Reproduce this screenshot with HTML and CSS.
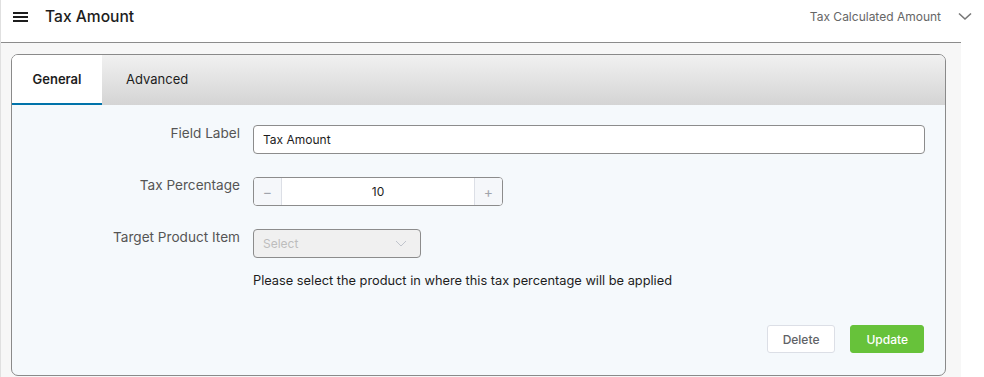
FILE: index.html
```html
<!DOCTYPE html>
<html lang="en">
<head>
    <meta charset="UTF-8">
    <title>Tax Amount</title>
    <link rel="stylesheet" href="styles.css">
</head>
<body>
    <div class="page">
        <header class="top-bar">
            <div class="top-left">
                <svg class="menu-icon" width="16" height="12" viewBox="0 0 16 12">
                    <rect x="0" y="1" width="15" height="2" fill="#1d1d1d"/>
                    <rect x="0" y="5" width="15" height="2" fill="#1d1d1d"/>
                    <rect x="0" y="9" width="15" height="2" fill="#1d1d1d"/>
                </svg>
                <h1 class="page-title">Tax Amount</h1>
            </div>
            <div class="top-right">
                <span class="field-type">Tax Calculated Amount</span>
                <svg class="chevron" width="14" height="9" viewBox="0 0 14 9">
                    <path d="M1 1.5 L7 7 L13 1.5" fill="none" stroke="#777" stroke-width="1.6"/>
                </svg>
            </div>
        </header>

        <div class="content">
            <div class="panel">
                <div class="tabs">
                    <div class="tab active">General</div>
                    <div class="tab">Advanced</div>
                </div>

                <div class="panel-body">
                    <div class="form-row">
                        <label class="form-label">Field Label</label>
                        <input type="text" class="text-input" value="Tax Amount">
                    </div>

                    <div class="form-row">
                        <label class="form-label">Tax Percentage</label>
                        <div class="stepper">
                            <span class="step-btn minus">&minus;</span>
                            <span class="step-value">10</span>
                            <span class="step-btn plus">+</span>
                        </div>
                    </div>

                    <div class="form-row">
                        <label class="form-label">Target Product Item</label>
                        <div class="field-wrap">
                            <div class="select-box">
                                <span>Select</span>
                                <svg width="12" height="7" viewBox="0 0 12 7">
                                    <path d="M1 1 L6 6 L11 1" fill="none" stroke="#c0c4cc" stroke-width="1"/>
                                </svg>
                            </div>
                            <p class="help-text">Please select the product in where this tax percentage will be applied</p>
                        </div>
                    </div>

                    <div class="actions">
                        <button class="btn btn-delete">Delete</button>
                        <button class="btn btn-update">Update</button>
                    </div>
                </div>
            </div>
        </div>
    </div>
</body>
</html>
```

FILE: styles.css
```css
* {
    margin: 0;
    padding: 0;
    box-sizing: border-box;
}

body {
    font-family: Inter, "Noto Sans", "Liberation Sans", sans-serif;
    background: white;
    color: #1d1d1d;
    height: 377px;
    overflow: hidden;
}

.page {
    width: 961px;
    height: 377px;
    border-left: 1px solid #e0e0e0;
    background: #f7f7f7;
}

.top-bar {
    height: 43px;
    background: white;
    border-bottom: 1px solid #8c8c8c;
    display: flex;
    justify-content: space-between;
    align-items: flex-start;
    padding: 7px 0 0 12px;
}

.top-left {
    display: flex;
    align-items: center;
    gap: 16px;
}

.menu-icon {
    display: block;
}

.page-title {
    font-size: 15.6px;
    font-weight: 500;
    color: #1d1d1d;
    line-height: 20px;
}

.top-right {
    display: flex;
    align-items: center;
    gap: 17px;
    margin-right: -11px;
    padding-top: 2px;
}

.field-type {
    font-size: 12px;
    color: #666;
}

.chevron {
    display: block;
}

.content {
    padding: 11px 15px 0 10px;
}

.panel {
    border: 1px solid #8a8a8a;
    border-radius: 7px;
    overflow: hidden;
    background: #f5f9fc;
    height: 322px;
}

.tabs {
    display: flex;
    height: 50px;
    background: linear-gradient(to bottom, #f1f1f1 0%, #d4d4d4 100%);
}

.tab {
    padding: 0 24px;
    font-size: 13px;
    line-height: 48px;
    color: #1d1d1d;
}

.tab.active {
    width: 90px;
    padding: 0;
    text-align: center;
    background: white;
    font-weight: 600;
    border-bottom: 2px solid #0073aa;
}

.panel-body {
    padding: 20px 20px 0 0;
}

.form-row {
    display: grid;
    grid-template-columns: 228px 1fr;
    column-gap: 13px;
    margin-bottom: 23px;
}

.form-label {
    text-align: right;
    font-size: 13.6px;
    color: #555;
    line-height: 16px;
}

.text-input {
    height: 29px;
    border: 1px solid #8c8c8c;
    border-radius: 4px;
    background: white;
    padding: 0 9px;
    font-family: inherit;
    font-size: 12px;
    color: #1d1d1d;
}

.stepper {
    width: 250px;
    height: 29px;
    display: flex;
    border: 1px solid #8c8c8c;
    border-radius: 4px;
    background: white;
    overflow: hidden;
}

.step-btn {
    width: 28px;
    display: flex;
    align-items: center;
    justify-content: center;
    background: #f5f7fa;
    color: #a0a4ac;
    font-size: 14px;
}

.minus {
    border-right: 1px solid #dcdfe6;
}

.plus {
    border-left: 1px solid #dcdfe6;
}

.step-value {
    flex: 1;
    text-align: center;
    font-size: 12px;
    line-height: 27px;
}

.select-box {
    width: 168px;
    height: 29px;
    border: 1px solid #8c8c8c;
    border-radius: 4px;
    background: #f0f0f0;
    display: flex;
    align-items: center;
    justify-content: space-between;
    padding: 0 13px 0 9px;
    font-size: 12px;
    color: #bdbdbd;
}

.help-text {
    margin-top: 15px;
    font-size: 12.8px;
    color: #1d1d1d;
    line-height: 16px;
}

.actions {
    display: flex;
    justify-content: flex-end;
    gap: 15px;
    margin: 36px 1px 0 0;
}

.btn {
    height: 28px;
    border-radius: 3px;
    font-family: inherit;
    font-size: 12px;
    font-weight: 500;
    padding: 0 15px;
}

.btn-delete {
    background: white;
    border: 1px solid #dcdfe6;
    color: #606266;
}

.btn-update {
    background: #67c23a;
    border: 1px solid #67c23a;
    color: white;
    padding: 0 15px;
}
```
